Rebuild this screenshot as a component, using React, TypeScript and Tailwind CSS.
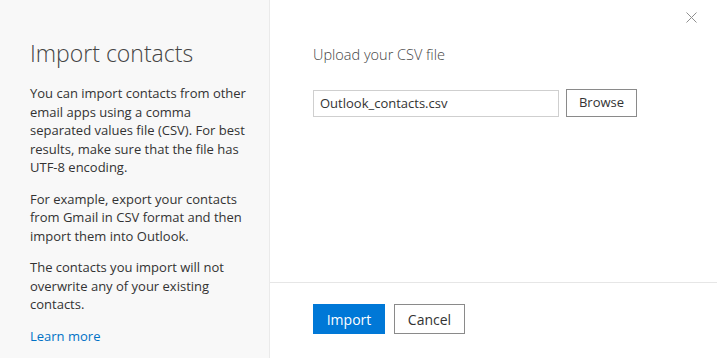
export default function App() {
  return (
    <div className="flex h-[358px] w-[717px] overflow-hidden bg-white font-['Open_Sans',sans-serif] text-[#333]">
      {/* Left info panel */}
      <aside className="w-[270px] shrink-0 border-r border-[#eaeaea] bg-[#f8f8f8] pl-[30px] pr-[20px] pt-[36px]">
        <h1 className="text-[23px] font-light leading-[34px] text-[#444]">Import contacts</h1>
        <div className="mt-[14px] space-y-[13px] text-[13px] leading-[18.5px] text-[#333]">
          <p>
            You can import contacts from other email apps using a comma separated values file (CSV). For best
            results, make sure that the file has UTF-8 encoding.
          </p>
          <p>For example, export your contacts from Gmail in CSV format and then import them into Outlook.</p>
          <p>The contacts you import will not overwrite any of your existing contacts.</p>
          <p>
            <a href="#" className="text-[#0072c6]">
              Learn more
            </a>
          </p>
        </div>
      </aside>

      {/* Right content panel */}
      <main className="flex flex-1 flex-col">
        <div className="flex justify-end pr-[20px] pt-[12px]">
          <svg width="11" height="11" viewBox="0 0 11 11" className="text-[#8f8f8f]">
            <path d="M0.5 0.5L10.5 10.5M10.5 0.5L0.5 10.5" stroke="currentColor" strokeWidth="1" fill="none" />
          </svg>
        </div>
        <div className="flex-1 pl-[43px]">
          <h2 className="mt-[22px] text-[14.5px] font-light leading-[20px] text-[#444]">Upload your CSV file</h2>
          <div className="mt-[24px] flex items-center gap-[7px]">
            <input
              readOnly
              value="Outlook_contacts.csv"
              className="h-[27px] w-[246px] border border-[#cfcfcf] px-[6px] text-[13px] text-[#333] outline-none"
            />
            <button className="h-[28px] w-[71px] border border-[#8a8a8a] bg-white text-[13px] text-[#333]">Browse</button>
          </div>
        </div>
        <div className="flex h-[76px] items-start gap-[9px] border-t border-[#e6e6e6] pl-[43px] pt-[21px]">
          <button className="h-[30px] w-[72px] bg-[#0078d7] text-[14px] text-white">Import</button>
          <button className="h-[30px] w-[71px] border border-[#8a8a8a] bg-white text-[14px] text-[#333]">Cancel</button>
        </div>
      </main>
    </div>
  )
}
